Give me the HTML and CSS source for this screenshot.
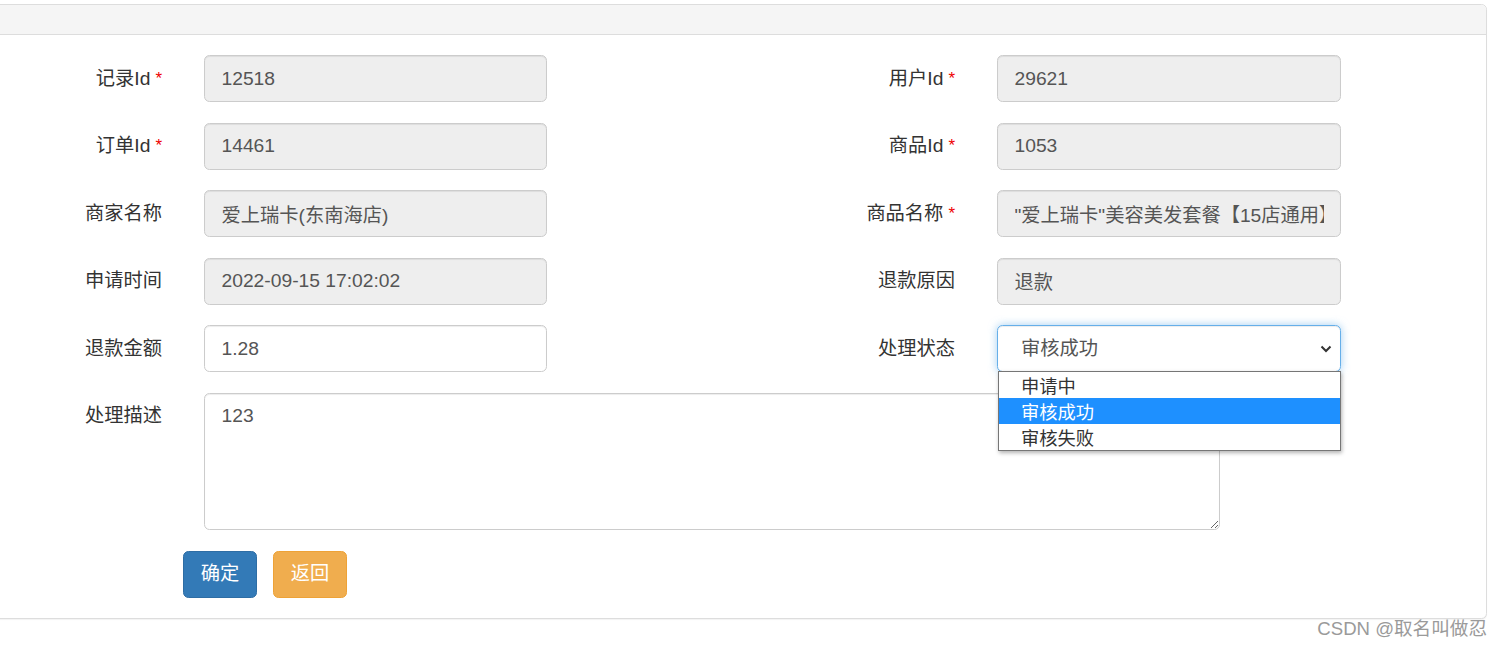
FILE: index.html
```html
<!DOCTYPE html>
<html lang="zh-CN">
<head>
<meta charset="utf-8">
<title>退款处理</title>
<link rel="stylesheet" href="styles.css">
</head>
<body>
<div class="page">
  <div class="panel">
    <div class="panel-heading"></div>
    <div class="panel-body">
      <form class="form-grid">
        <label class="ctl-label">记录Id <span class="req">*</span></label>
        <input class="form-control" type="text" readonly value="12518">
        <label class="ctl-label">用户Id <span class="req">*</span></label>
        <input class="form-control" type="text" readonly value="29621">

        <label class="ctl-label">订单Id <span class="req">*</span></label>
        <input class="form-control" type="text" readonly value="14461">
        <label class="ctl-label">商品Id <span class="req">*</span></label>
        <input class="form-control" type="text" readonly value="1053">

        <label class="ctl-label">商家名称</label>
        <input class="form-control" type="text" readonly value="爱上瑞卡(东南海店)">
        <label class="ctl-label">商品名称 <span class="req">*</span></label>
        <input class="form-control" type="text" readonly value="&quot;爱上瑞卡&quot;美容美发套餐【15店通用】">

        <label class="ctl-label">申请时间</label>
        <input class="form-control" type="text" readonly value="2022-09-15 17:02:02">
        <label class="ctl-label">退款原因</label>
        <input class="form-control" type="text" readonly value="退款">

        <label class="ctl-label">退款金额</label>
        <input class="form-control editable" type="text" value="1.28">
        <label class="ctl-label">处理状态</label>
        <div class="select-wrap">
          <div class="select-box">
            <span class="select-value">审核成功</span>
            <svg class="chevron" width="12" height="8" viewBox="0 0 12 8"><path d="M1.5 1.5 L6 6 L10.5 1.5" fill="none" stroke="#333" stroke-width="2"/></svg>
          </div>
          <ul class="dropdown">
            <li class="opt">申请中</li>
            <li class="opt selected">审核成功</li>
            <li class="opt">审核失败</li>
          </ul>
        </div>

        <label class="ctl-label top">处理描述</label>
        <textarea class="form-control area">123</textarea>

        <div class="actions">
          <button type="button" class="btn btn-primary">确定</button>
          <button type="button" class="btn btn-warning">返回</button>
        </div>
      </form>
    </div>
  </div>
  <div class="watermark">CSDN @取名叫做忍</div>
</div>
</body>
</html>
```

FILE: styles.css
```css
html, body {
  margin: 0;
  padding: 0;
  background: #fff;
}

body {
  font-family: "Liberation Sans", "Noto Sans CJK SC", sans-serif;
  font-size: 19.25px;
  color: #333;
}

.page {
  position: relative;
  padding: 4px 16px 0 0;
  height: 645px;
  box-sizing: border-box;
}

.panel {
  margin-left: -20px;
  border: 1px solid #ddd;
  border-radius: 5.5px;
  background: #fff;
  box-shadow: 0 1px 1px rgba(0,0,0,0.05);
}

.panel-heading {
  height: 29px;
  background: #f5f5f5;
  border-bottom: 1px solid #ddd;
  border-radius: 5px 5px 0 0;
}

.panel-body {
  padding: 20px 0 20px 19px;
}

.form-grid {
  display: grid;
  grid-template-columns: 162px 343px 366px 344px;
  grid-auto-rows: auto;
  column-gap: 42px;
  row-gap: 20.5px;
  margin: 0;
}

.ctl-label {
  display: flex;
  align-items: center;
  justify-content: flex-end;
  height: 47px;
  line-height: 27.5px;
  font-weight: normal;
  color: #333;
  white-space: nowrap;
}

.ctl-label.top {
  align-self: start;
}

.req {
  color: #e00;
  margin-left: 5px;
  font-size: 17px;
}

.form-control {
  display: block;
  box-sizing: border-box;
  width: 100%;
  height: 47px;
  margin: 0;
  padding: 8px 16.5px;
  font-family: "Liberation Sans", "Noto Sans CJK SC", sans-serif;
  font-size: 19.25px;
  line-height: 27.5px;
  color: #555;
  background: #eee;
  border: 1px solid #ccc;
  border-radius: 5.5px;
  box-shadow: inset 0 1px 1px rgba(0,0,0,0.075);
  outline: none;
}

.form-control.editable {
  background: #fff;
}

.form-control.area {
  grid-column: 2 / span 3;
  width: 1016px;
  height: 137.5px;
  background: #fff;
  resize: vertical;
  padding-top: 8.5px;
}

.select-wrap {
  position: relative;
  height: 47px;
}

.select-box {
  box-sizing: border-box;
  height: 47px;
  display: flex;
  align-items: center;
  justify-content: space-between;
  padding: 0 8px 0 23px;
  border: 1px solid #66afe9;
  border-radius: 5.5px;
  background: #fff;
  color: #555;
  line-height: 27.5px;
  box-shadow: inset 0 1px 1px rgba(0,0,0,0.075), 0 0 8px rgba(102,175,233,0.6);
}

.chevron {
  display: block;
}

.dropdown {
  position: absolute;
  left: 1px;
  top: 46px;
  width: 343px;
  margin: 0;
  padding: 0;
  list-style: none;
  box-sizing: border-box;
  background: #fff;
  border: 1px solid #767676;
  box-shadow: 1px 2px 4px rgba(0,0,0,0.3);
  z-index: 10;
}

.opt {
  height: 26px;
  line-height: 26px;
  padding-left: 22px;
  font-size: 18.3px;
  color: #333;
  font-family: "Noto Sans CJK SC", "Liberation Sans", sans-serif;
}

.opt.selected {
  background: #1e90ff;
  color: #fff;
}

.actions {
  grid-column: 1 / -1;
  display: flex;
  gap: 16px;
  padding-left: 183px;
}

.btn {
  box-sizing: border-box;
  width: 74px;
  height: 47px;
  padding: 0;
  border-radius: 5.5px;
  border: 1px solid transparent;
  color: #fff;
  font-family: "Liberation Sans", "Noto Sans CJK SC", sans-serif;
  font-size: 19.25px;
  line-height: 27.5px;
  cursor: pointer;
}

.btn-primary {
  background: #337ab7;
  border-color: #2e6da4;
}

.btn-warning {
  background: #f0ad4e;
  border-color: #eea236;
}

.watermark {
  position: absolute;
  right: 16px;
  top: 617px;
  font-size: 18.6px;
  color: #9a9a9a;
  font-family: "Liberation Sans", "Noto Sans CJK SC", sans-serif;
  line-height: 24px;
}
```
